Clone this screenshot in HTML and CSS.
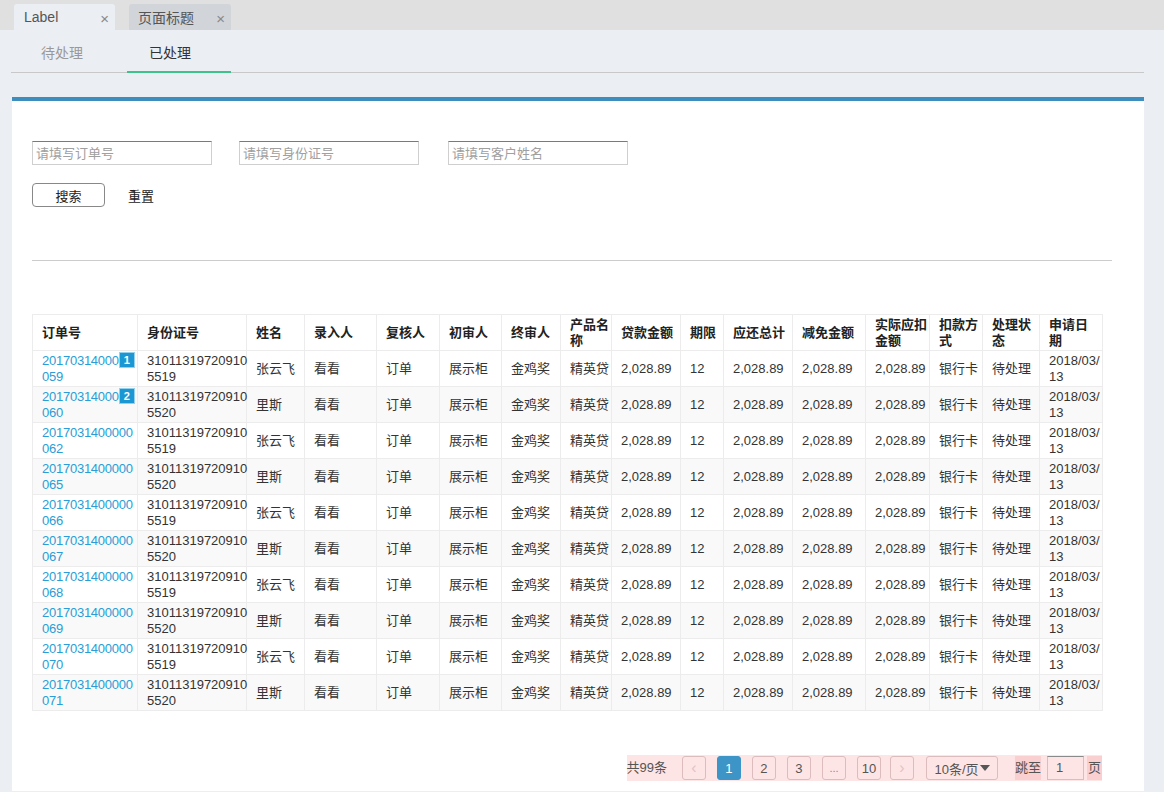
FILE: index.html
```html
<!DOCTYPE html>
<html lang="zh-CN">
<head>
<meta charset="utf-8">
<title>已处理</title>
<link rel="stylesheet" href="styles.css">
</head>
<body>
<div class="topbar">
  <div class="tab tab-active"><span>Label</span><span class="tab-close">×</span></div>
  <div class="tab tab-idle"><span>页面标题</span><span class="tab-close">×</span></div>
</div>
<div class="subtabs">
  <div class="subtab">待处理</div>
  <div class="subtab subtab-on">已处理</div>
</div>
<div class="card">
  <div class="filters">
    <input class="field" placeholder="请填写订单号">
    <input class="field" placeholder="请填写身份证号">
    <input class="field" placeholder="请填写客户姓名">
  </div>
  <div class="actions">
    <button class="btn">搜索</button>
    <span class="reset">重置</span>
  </div>
  <div class="divider"></div>
  <table class="grid">
    <colgroup>
      <col style="width:105px"><col style="width:109px"><col style="width:58px"><col style="width:72px">
      <col style="width:63px"><col style="width:62px"><col style="width:59px"><col style="width:51px">
      <col style="width:69px"><col style="width:43px"><col style="width:69px"><col style="width:73px">
      <col style="width:64px"><col style="width:53px"><col style="width:57px"><col style="width:63px">
    </colgroup>
    <thead>
      <tr>
        <th>订单号</th><th>身份证号</th><th>姓名</th><th>录入人</th><th>复核人</th><th>初审人</th><th>终审人</th>
        <th>产品名<br>称</th><th>贷款金额</th><th>期限</th><th>应还总计</th><th>减免金额</th>
        <th>实际应扣<br>金额</th><th>扣款方<br>式</th><th>处理状<br>态</th><th>申请日<br>期</th>
      </tr>
    </thead>
    <tbody>
      <tr>
        <td><a class="link">20170314000<span class="badge">1</span><br>059</a></td><td>31011319720910<br>5519</td><td>张云飞</td><td>看看</td><td>订单</td><td>展示柜</td><td>金鸡奖</td><td>精英贷</td><td>2,028.89</td><td>12</td><td>2,028.89</td><td>2,028.89</td><td>2,028.89</td><td>银行卡</td><td>待处理</td><td>2018/03/<br>13</td>
      </tr>
      <tr>
        <td><a class="link">20170314000<span class="badge">2</span><br>060</a></td><td>31011319720910<br>5520</td><td>里斯</td><td>看看</td><td>订单</td><td>展示柜</td><td>金鸡奖</td><td>精英贷</td><td>2,028.89</td><td>12</td><td>2,028.89</td><td>2,028.89</td><td>2,028.89</td><td>银行卡</td><td>待处理</td><td>2018/03/<br>13</td>
      </tr>
      <tr>
        <td><a class="link">2017031400000<br>062</a></td><td>31011319720910<br>5519</td><td>张云飞</td><td>看看</td><td>订单</td><td>展示柜</td><td>金鸡奖</td><td>精英贷</td><td>2,028.89</td><td>12</td><td>2,028.89</td><td>2,028.89</td><td>2,028.89</td><td>银行卡</td><td>待处理</td><td>2018/03/<br>13</td>
      </tr>
      <tr>
        <td><a class="link">2017031400000<br>065</a></td><td>31011319720910<br>5520</td><td>里斯</td><td>看看</td><td>订单</td><td>展示柜</td><td>金鸡奖</td><td>精英贷</td><td>2,028.89</td><td>12</td><td>2,028.89</td><td>2,028.89</td><td>2,028.89</td><td>银行卡</td><td>待处理</td><td>2018/03/<br>13</td>
      </tr>
      <tr>
        <td><a class="link">2017031400000<br>066</a></td><td>31011319720910<br>5519</td><td>张云飞</td><td>看看</td><td>订单</td><td>展示柜</td><td>金鸡奖</td><td>精英贷</td><td>2,028.89</td><td>12</td><td>2,028.89</td><td>2,028.89</td><td>2,028.89</td><td>银行卡</td><td>待处理</td><td>2018/03/<br>13</td>
      </tr>
      <tr>
        <td><a class="link">2017031400000<br>067</a></td><td>31011319720910<br>5520</td><td>里斯</td><td>看看</td><td>订单</td><td>展示柜</td><td>金鸡奖</td><td>精英贷</td><td>2,028.89</td><td>12</td><td>2,028.89</td><td>2,028.89</td><td>2,028.89</td><td>银行卡</td><td>待处理</td><td>2018/03/<br>13</td>
      </tr>
      <tr>
        <td><a class="link">2017031400000<br>068</a></td><td>31011319720910<br>5519</td><td>张云飞</td><td>看看</td><td>订单</td><td>展示柜</td><td>金鸡奖</td><td>精英贷</td><td>2,028.89</td><td>12</td><td>2,028.89</td><td>2,028.89</td><td>2,028.89</td><td>银行卡</td><td>待处理</td><td>2018/03/<br>13</td>
      </tr>
      <tr>
        <td><a class="link">2017031400000<br>069</a></td><td>31011319720910<br>5520</td><td>里斯</td><td>看看</td><td>订单</td><td>展示柜</td><td>金鸡奖</td><td>精英贷</td><td>2,028.89</td><td>12</td><td>2,028.89</td><td>2,028.89</td><td>2,028.89</td><td>银行卡</td><td>待处理</td><td>2018/03/<br>13</td>
      </tr>
      <tr>
        <td><a class="link">2017031400000<br>070</a></td><td>31011319720910<br>5519</td><td>张云飞</td><td>看看</td><td>订单</td><td>展示柜</td><td>金鸡奖</td><td>精英贷</td><td>2,028.89</td><td>12</td><td>2,028.89</td><td>2,028.89</td><td>2,028.89</td><td>银行卡</td><td>待处理</td><td>2018/03/<br>13</td>
      </tr>
      <tr>
        <td><a class="link">2017031400000<br>071</a></td><td>31011319720910<br>5520</td><td>里斯</td><td>看看</td><td>订单</td><td>展示柜</td><td>金鸡奖</td><td>精英贷</td><td>2,028.89</td><td>12</td><td>2,028.89</td><td>2,028.89</td><td>2,028.89</td><td>银行卡</td><td>待处理</td><td>2018/03/<br>13</td>
      </tr>
    </tbody>
  </table>
  <div class="pager-row">
    <div class="pager">
      <span class="total">共99条</span>
      <span class="pbtn pbtn-arrow">‹</span>
      <span class="pbtn pbtn-on">1</span>
      <span class="pbtn">2</span>
      <span class="pbtn">3</span>
      <span class="pbtn pbtn-more">...</span>
      <span class="pbtn">10</span>
      <span class="pbtn pbtn-arrow">›</span>
      <span class="psize">10条/页<span class="caret"></span></span>
      <span class="jump">跳至</span>
      <span class="jump-input">1</span>
      <span class="jump jump-page">页</span>
    </div>
  </div>
</div>
</body>
</html>
```

FILE: styles.css
```css
html, body {
  margin: 0;
  padding: 0;
}
body {
  background: #ebeef3;
  font-family: "Liberation Sans", "Noto Sans CJK SC", sans-serif;
  font-size: 13px;
  color: #333;
  height: 792px;
  overflow: hidden;
}

/* top window tabs */
.topbar {
  height: 30px;
  background: #e0e0e0;
  display: flex;
  align-items: flex-end;
  padding-left: 14px;
  gap: 14px;
}
.tab {
  width: 101px;
  height: 26px;
  box-sizing: border-box;
  border-radius: 3px 3px 0 0;
  display: flex;
  align-items: center;
  justify-content: space-between;
  padding: 0 6px 0 10px;
  font-size: 14px;
  color: #555;
}
.tab-active {
  background: #ebeef3;
}
.tab-idle {
  width: 102px;
  background: #d1d4d9;
  padding-left: 9px;
}
.tab-close {
  font-size: 15px;
  color: #888;
  padding-top: 3px;
}

/* sub tabs */
.subtabs {
  display: flex;
  gap: 4px;
  margin: 0 20px 0 11px;
  padding-left: 8px;
  border-bottom: 1px solid #c8c8c8;
}
.subtab {
  width: 104px;
  box-sizing: border-box;
  padding: 6px 0 0 22px;
  height: 43px;
  line-height: 35px;
  font-size: 14px;
  color: #999;
  border-bottom: 2px solid transparent;
  margin-bottom: -1px;
}
.subtab-on {
  color: #333;
  border-bottom-color: #3ec28b;
}

/* card */
.card {
  margin: 24px 20px 0 12px;
  background: #fff;
  border-top: 4px solid #3d8ebf;
  padding: 40px 32px 10px 20px;
}
.filters {
  display: flex;
  gap: 27px;
}
.field {
  width: 180px;
  height: 24px;
  box-sizing: border-box;
  border: 1px solid #cfcfcf;
  border-top-color: #7a7a7a;
  padding: 0 3px;
  margin: 0;
  font-family: inherit;
  font-size: 13px;
  color: #333;
  background: #fff;
  outline: none;
}
.field:nth-child(3) {
  margin-left: 2px;
}
.field::placeholder {
  color: #a0a0a0;
}
.actions {
  margin-top: 18px;
  display: flex;
  align-items: center;
}
.btn {
  width: 73px;
  height: 24px;
  box-sizing: border-box;
  border: 1px solid #888;
  border-radius: 4px;
  background: #fff;
  font-family: inherit;
  font-size: 13px;
  color: #222;
  padding: 0;
}
.reset {
  margin-left: 23px;
  font-size: 13px;
  color: #222;
}
.divider {
  margin-top: 53px;
  height: 1px;
  background: #cccccc;
}

/* table */
.grid {
  margin-top: 53px;
  width: 1070px;
  table-layout: fixed;
  border-collapse: collapse;
}
.grid th,
.grid td {
  border: 1px solid #ececec;
  height: 33px;
  padding: 1px 0 1px 9px;
  line-height: 16px;
  text-align: left;
  vertical-align: middle;
  white-space: nowrap;
  font-size: 13px;
  color: #333;
}
.grid th {
  font-weight: bold;
  color: #222;
}
.grid tbody tr:nth-child(even) td {
  background: #f9f9f9;
}
.link {
  color: #2a9dd6;
  letter-spacing: -0.25px;
}
.badge {
  display: inline-block;
  width: 14px;
  height: 14px;
  line-height: 14px;
  text-align: center;
  background: #1b98d4;
  border: 1px solid #93d2ee;
  color: #fff;
  font-size: 11px;
  font-weight: bold;
  letter-spacing: 0;
  margin-left: 0;
  vertical-align: 1px;
}

/* pagination */
.pager-row {
  margin-top: 44px;
  display: flex;
  justify-content: flex-end;
  padding-right: 10px;
}
.pager {
  display: flex;
  align-items: center;
  height: 26px;
  background: #fde5e5;
  color: #555;
  font-size: 13px;
}
.total {
  margin-right: 15px;
  line-height: 26px;
}
.pbtn {
  width: 24px;
  height: 24px;
  box-sizing: border-box;
  border: 1px solid #dcbcbc;
  border-radius: 3px;
  display: flex;
  align-items: center;
  justify-content: center;
  margin-right: 11px;
  color: #555;
  font-size: 13px;
}
.pbtn-on {
  background: #3d94c6;
  border-color: #3d94c6;
  color: #fff;
}
.pbtn-arrow {
  color: #e3c3c3;
  font-size: 16px;
}
.pbtn-more {
  color: #888;
  font-size: 11px;
  margin-right: 11px;
}
.pbtn:nth-child(7) {
  margin-right: 9px;
}
.pbtn:nth-child(8) {
  margin-right: 12px;
}
.psize {
  width: 72px;
  height: 24px;
  box-sizing: border-box;
  border: 1px solid #dcbcbc;
  border-radius: 3px;
  display: flex;
  align-items: center;
  justify-content: center;
  margin-right: 17px;
  color: #555;
  font-size: 13px;
}
.caret {
  width: 0;
  height: 0;
  border-left: 5px solid transparent;
  border-right: 5px solid transparent;
  border-top: 6px solid #555;
  margin-left: 1px;
}
.jump {
  background: #f9cfcf;
  height: 24px;
  line-height: 24px;
  padding: 0;
  color: #555;
  font-size: 13px;
}
.jump-input {
  width: 37px;
  height: 24px;
  box-sizing: border-box;
  border: 1px solid #cfc2c2;
  border-top-color: #8a8a8a;
  margin: 0 3px 0 6px;
  padding-left: 8px;
  line-height: 22px;
  color: #555;
}
.jump-page {
  padding: 0 1px;
}
```
